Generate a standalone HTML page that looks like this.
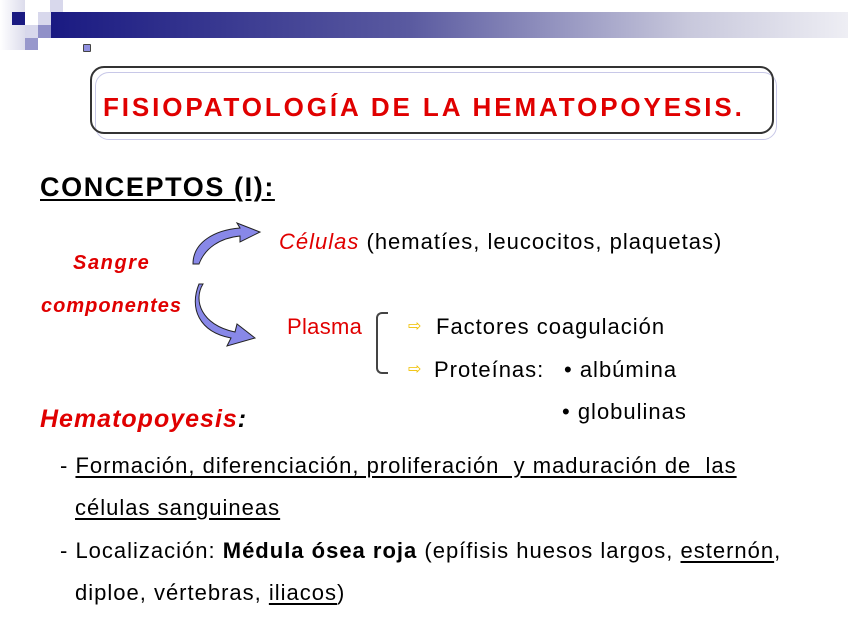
<!DOCTYPE html>
<html><head><meta charset="utf-8"><style>
body{margin:0;width:848px;height:636px;background:#fff;position:relative;overflow:hidden;font-family:"Liberation Sans",sans-serif;}
.a{position:absolute;white-space:nowrap;line-height:1;}
.t{font-size:22px;color:#000;letter-spacing:1px;}
.r{color:#e00000;}
.u{text-decoration:underline;text-underline-offset:3px;}
</style></head><body>
<div class="a" style="left:50px;top:12px;width:798px;height:26px;background:linear-gradient(90deg,#1a1a82,#5a5aa0 45%,#c8c8dc 80%,#eeeef4)"></div>
<div class="a" style="left:0;top:0;width:25px;height:50px;background:linear-gradient(90deg,#fff,#dcdcec)"></div>
<div class="a" style="left:12px;top:12px;width:13px;height:13px;background:#1a1a82"></div>
<div class="a" style="left:38px;top:12px;width:13px;height:13px;background:#d8d8ec"></div>
<div class="a" style="left:50px;top:0;width:13px;height:12px;background:#d8d8ec"></div>
<div class="a" style="left:38px;top:25px;width:13px;height:13px;background:#9090c8"></div>
<div class="a" style="left:25px;top:25px;width:13px;height:13px;background:#d8d8ec"></div>
<div class="a" style="left:25px;top:38px;width:13px;height:12px;background:#9898cc"></div>
<div class="a" style="left:83px;top:44px;width:6px;height:6px;background:#9090e0;border:1px solid #444;border-radius:1px"></div>
<div class="a" style="left:95px;top:72px;width:680px;height:66px;border:1px solid #c8c8e8;border-radius:14px"></div>
<div class="a" style="left:90px;top:66px;width:680px;height:64px;border:2px solid #333;border-radius:14px"></div>
<div class="a r" style="left:103px;top:94px;font-size:26px;font-weight:bold;letter-spacing:2.9px">FISIOPATOLOGÍA DE LA HEMATOPOYESIS.</div>
<div class="a u" style="left:40px;top:174px;font-size:27px;font-weight:bold;letter-spacing:1.6px">CONCEPTOS (I):</div>
<svg class="a" style="left:185px;top:220px" width="100" height="130">
<path d="M8 44 C8 22 30 10 55 8 L52 3 L75 12 L55 22 L55 16 C35 18 20 28 14 44 Z" fill="#8888e8" stroke="#222" stroke-width="1"/>
<path d="M18 64 C8 80 16 105 50 112 L52 104 L70 118 L42 126 L46 118 C14 112 4 88 14 64 Z" fill="#8888e8" stroke="#222" stroke-width="1"/>
</svg>
<div class="a t" style="left:279px;top:231px"><span class="r" style="font-style:italic">Células</span> (hematíes, leucocitos, plaquetas)</div>
<div class="a r" style="left:73px;top:253px;font-size:20px;font-weight:bold;font-style:italic;letter-spacing:1.6px">Sangre</div>
<div class="a r" style="left:41px;top:296px;font-size:20px;font-weight:bold;font-style:italic;letter-spacing:1px">componentes</div>
<div class="a t r" style="left:287px;top:316px;letter-spacing:0.3px">Plasma</div>
<div class="a" style="left:376px;top:312px;width:10px;height:58px;border:2px solid #444;border-right:none;border-radius:6px 0 0 6px"></div>
<div class="a" style="left:408px;top:319px;font-size:16px;color:#f0c000">⇨</div>
<div class="a t" style="left:436px;top:316px">Factores coagulación</div>
<div class="a" style="left:408px;top:362px;font-size:16px;color:#f0c000">⇨</div>
<div class="a t" style="left:434px;top:359px">Proteínas:</div>
<div class="a t" style="left:564px;top:359px">• albúmina</div>
<div class="a t" style="left:562px;top:401px">• globulinas</div>
<div class="a r" style="left:40px;top:407px;font-size:25px;font-weight:bold;font-style:italic;letter-spacing:1px">Hematopoyesis<span style="color:#000">:</span></div>
<div class="a t" style="left:60px;top:455px">- <span class="u">Formación, diferenciación, proliferación&nbsp; y maduración de&nbsp; las</span></div>
<div class="a t u" style="left:75px;top:497px">células sanguineas</div>
<div class="a t" style="left:60px;top:540px">- Localización: <b>Médula ósea roja</b> (epífisis huesos largos, <span class="u">esternón</span>,</div>
<div class="a t" style="left:75px;top:582px">diploe, vértebras, <span class="u">iliacos</span>)</div>
</body></html>
